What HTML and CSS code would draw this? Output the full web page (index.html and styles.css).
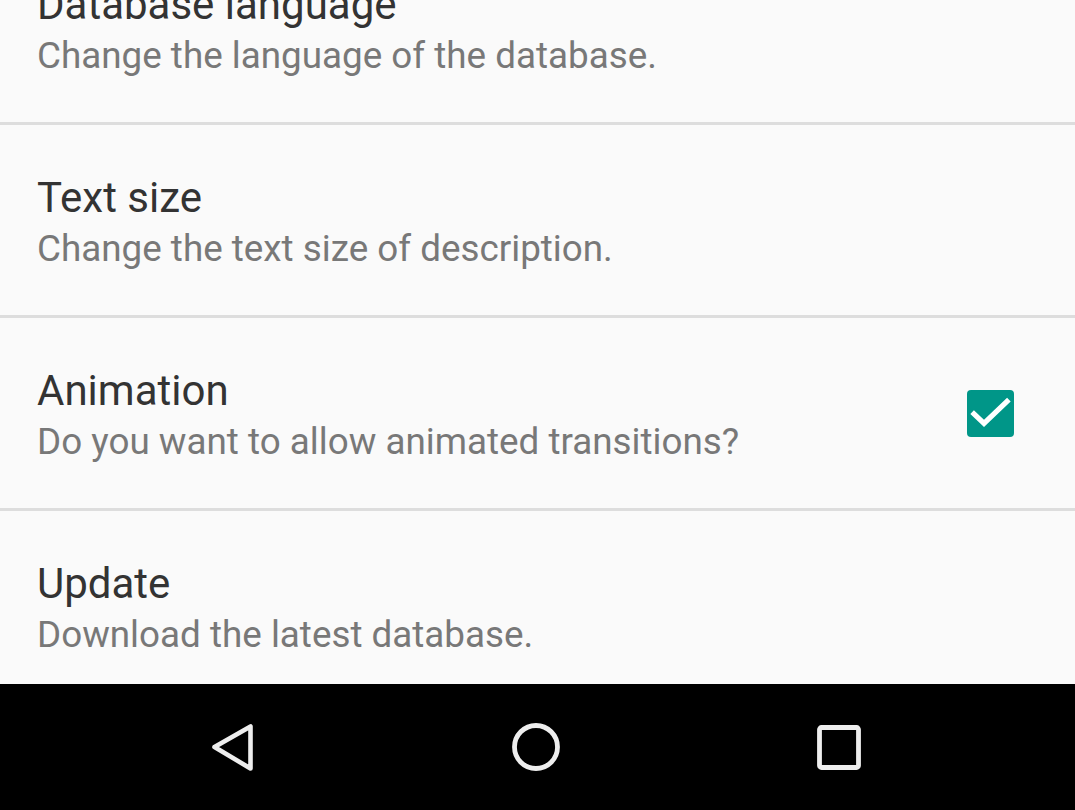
FILE: index.html
```html
<!DOCTYPE html>
<html>
<head>
<meta charset="utf-8">
<link rel="stylesheet" href="styles.css">
</head>
<body>
<div class="screen">
  <div class="content">
    <div class="list">
      <div class="row">
        <div class="texts">
          <div class="title">Database language</div>
          <div class="summary">Change the language of the database.</div>
        </div>
      </div>
      <div class="row">
        <div class="texts">
          <div class="title">Text size</div>
          <div class="summary">Change the text size of description.</div>
        </div>
      </div>
      <div class="row">
        <div class="texts">
          <div class="title">Animation</div>
          <div class="summary">Do you want to allow animated transitions?</div>
        </div>
        <div class="checkbox">
          <svg width="47" height="47" viewBox="0 0 47 47">
            <rect x="0" y="0" width="47" height="47" rx="4" fill="#009688"/>
            <path d="M7 24 L17 33.5 L40 11.5" fill="none" stroke="#ffffff" stroke-width="5.2" stroke-linecap="square"/>
          </svg>
        </div>
      </div>
      <div class="row">
        <div class="texts">
          <div class="title">Update</div>
          <div class="summary">Download the latest database.</div>
        </div>
      </div>
    </div>
  </div>
  <div class="navbar">
    <svg class="nav-icon" width="48" height="48" viewBox="0 0 48 48">
      <path d="M5.5 24 L41.5 3.5 L41.5 45.5 Z" fill="none" stroke="#eeeeee" stroke-width="4.6" stroke-linejoin="round"/>
    </svg>
    <svg class="nav-icon" width="48" height="48" viewBox="0 0 48 48">
      <circle cx="24" cy="24" r="21.5" fill="none" stroke="#eeeeee" stroke-width="4.8"/>
    </svg>
    <svg class="nav-icon" width="48" height="48" viewBox="0 0 48 48">
      <rect x="4.5" y="4.5" width="39" height="40" rx="2" fill="none" stroke="#eeeeee" stroke-width="4.8"/>
    </svg>
  </div>
</div>
</body>
</html>
```
FILE: styles.css
```css
html, body {
  margin: 0;
  padding: 0;
  background: #fafafa;
}

.screen {
  width: 1075px;
  height: 810px;
  display: flex;
  flex-direction: column;
  overflow: hidden;
  font-family: Roboto, "Noto Sans", sans-serif;
}

.content {
  height: 684px;
  overflow: hidden;
  background: #fafafa;
  flex: none;
}

.list {
  margin-top: -68px;
}

.row {
  height: 190px;
  border-bottom: 3px solid #dddddd;
  display: flex;
  align-items: flex-start;
  padding: 0 61px 0 37px;
  box-sizing: content-box;
}

.texts {
  flex: 1;
  padding-top: 48px;
}

.title {
  font-size: 42px;
  line-height: 50px;
  color: #333333;
}

.summary {
  font-size: 36.8px;
  line-height: 44px;
  margin-top: 4px;
  color: #787878;
}

.checkbox {
  align-self: center;
  width: 47px;
  height: 47px;
  display: flex;
}

.navbar {
  flex: 1;
  background: #000000;
  display: flex;
  justify-content: center;
  align-items: center;
  gap: 255px;
  padding-right: 3px;
}

.nav-icon {
  display: block;
}
```
